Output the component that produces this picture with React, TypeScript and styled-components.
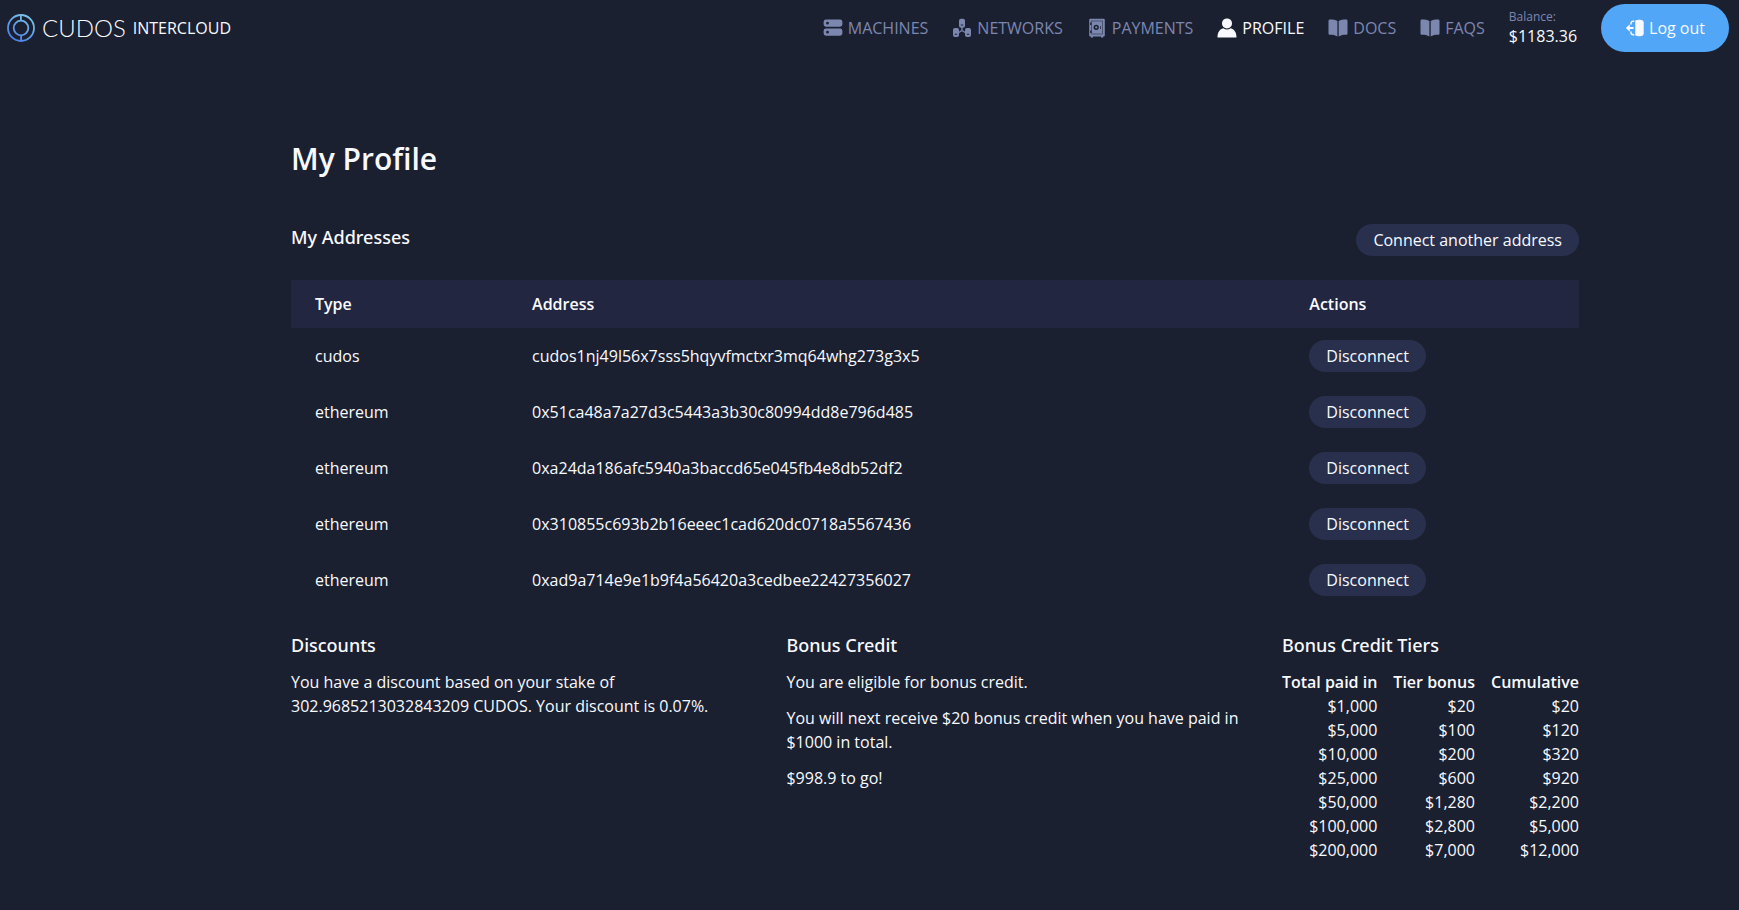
import React from 'react';
import styled, { createGlobalStyle } from 'styled-components';

const GlobalStyle = createGlobalStyle`
  *, *::before, *::after { box-sizing: border-box; }
  body {
    margin: 0;
    background: #1b2030;
    color: #f8faff;
    font: 400 16px/24px "Open Sans", "Liberation Sans", sans-serif;
  }
  h1, h2, p { margin: 0; }
`;

const Header = styled.header`
  display: flex;
  align-items: center;
  justify-content: space-between;
  height: 56px;
  padding: 0 10px 0 7px;
`;

const Brand = styled.a`
  display: flex;
  align-items: center;
  gap: 7px;
  color: #f8faff;
  text-decoration: none;
`;

const Wordmark = styled.span`
  font: 300 24px/28px Lato, sans-serif;
`;

const Nav = styled.nav`
  display: flex;
  align-items: center;
  gap: 24px;
`;

const NavLink = styled.a<{ $active?: boolean }>`
  display: flex;
  align-items: center;
  gap: 5px;
  color: ${(p) => (p.$active ? '#f8faff' : '#7c87b0')};
  text-decoration: none;
`;

const Balance = styled.div`
  display: flex;
  flex-direction: column;
  line-height: 22px;
`;

const BalanceLabel = styled.span`
  font-size: 12px;
  line-height: 16px;
  color: #7c87b0;
`;

const LogoutButton = styled.button`
  display: flex;
  align-items: center;
  gap: 4px;
  height: 48px;
  padding: 0 24px;
  border: 0;
  border-radius: 24px;
  background: #52a6f8;
  color: #f8faff;
  font: inherit;
  cursor: pointer;
`;

const Main = styled.main`
  padding: 84px 160px 40px 291px;
`;

const Title = styled.h1`
  font-size: 30px;
  line-height: 38px;
  font-weight: 600;
`;

const SectionBar = styled.div`
  display: flex;
  justify-content: space-between;
  margin: 46px 0 24px;
`;

const SectionTitle = styled.h2`
  font: 500 18px/26px "Noto Sans", "Open Sans", sans-serif;
`;

const PillButton = styled.button`
  height: 32px;
  padding: 0 17px;
  border: 0;
  border-radius: 16px;
  background: #28304e;
  color: #f8faff;
  font: inherit;
  cursor: pointer;
`;

const AddressTable = styled.table`
  width: 100%;
  border-collapse: collapse;
  text-align: left;

  thead { background: #222640; }
  th { height: 48px; padding: 0 24px; font-weight: 600; }
  td { height: 56px; padding: 0 24px; }
  ${PillButton} { display: block; }
`;

const Summary = styled.div`
  display: flex;
  align-items: flex-start;
  gap: 32px;
  padding-top: 24px;
`;

const Panel = styled.section<{ $fit?: boolean }>`
  display: flex;
  flex-direction: column;
  gap: 12px;
  flex: ${(p) => (p.$fit ? '0 0 auto' : '1 1 0')};
`;

const TierTable = styled.table`
  border-collapse: collapse;
  text-align: right;

  th { font-weight: 600; }
  th, td { padding: 0 0 0 16px; }
  th:first-child, td:first-child { padding-left: 0; }
`;

const Icon = ({ children }: { children: React.ReactNode }) => (
  <svg width="20" height="20" viewBox="0 0 20 20" fill="currentColor" aria-hidden="true">
    {children}
  </svg>
);

const MachinesIcon = () => (
  <Icon>
    <path fillRule="evenodd" d="M3 1.5h14a2.4 2.4 0 0 1 2.4 2.4v2.4A2.4 2.4 0 0 1 17 8.7H3A2.4 2.4 0 0 1 .6 6.3V3.9A2.4 2.4 0 0 1 3 1.5zM4.5 3.8a1.4 1.4 0 1 0 0 2.8 1.4 1.4 0 0 0 0-2.8z" />
    <path fillRule="evenodd" d="M3 10.5h14a2.4 2.4 0 0 1 2.4 2.4v2.4a2.4 2.4 0 0 1-2.4 2.4H3a2.4 2.4 0 0 1-2.4-2.4v-2.4A2.4 2.4 0 0 1 3 10.5zM4.5 12.8a1.4 1.4 0 1 0 0 2.8 1.4 1.4 0 0 0 0-2.8z" />
  </Icon>
);

const NetworksIcon = () => (
  <Icon>
    <path d="M10 9v4M10 12.5l-4 2.5M10 12.5l4 2.5" stroke="currentColor" strokeWidth="1.3" />
    <path fillRule="evenodd" d="M9 .8h2a2 2 0 0 1 2 2v5a2 2 0 0 1-2 2H9a2 2 0 0 1-2-2v-5a2 2 0 0 1 2-2zM8.8 6.6v1h2.4v-1z" />
    <path fillRule="evenodd" d="M3 10h2a2 2 0 0 1 2 2v5a2 2 0 0 1-2 2H3a2 2 0 0 1-2-2v-5a2 2 0 0 1 2-2zM2.8 15.8v1h2.4v-1z" />
    <path fillRule="evenodd" d="M15 10h2a2 2 0 0 1 2 2v5a2 2 0 0 1-2 2h-2a2 2 0 0 1-2-2v-5a2 2 0 0 1 2-2zM14.8 15.8v1h2.4v-1z" />
  </Icon>
);

const PaymentsIcon = () => (
  <Icon>
    <path d="M3.2.8h13.6a1 1 0 0 1 1 1v15.6a1 1 0 0 1-1 1h-.6v1.1h-2.2v-1.1H6v1.1H3.800v-1.1h-.6a1 1 0 0 1-1-1V1.800a1 1 0 0 1 1-1z" />
    <rect x="4.5" y="3" width="11" height="13" fill="none" stroke="#1b2030" strokeOpacity=".55" strokeWidth=".9" />
    <path d="M3.800 4.500v2.500M3.800 12.500V15" stroke="#1b2030" strokeWidth="1.3" />
    <circle cx="9.200" cy="9.300" r="1.900" fill="none" stroke="#1b2030" strokeWidth="1.5" />
    <path d="M13.500 8V11" stroke="#1b2030" strokeOpacity=".7" />
  </Icon>
);

const ProfileIcon = () => (
  <Icon>
    <circle cx="10" cy="5.4" r="5" />
    <path d="M.5 19.500c0-5.500 2.500-8.300 5.800-9.200 2.200 1.600 5.200 1.600 7.400 0 3.300.9 5.800 3.700 5.800 9.200z" />
  </Icon>
);

const BookIcon = () => (
  <Icon>
    <path d="M9.400 3v15.500C7.300 17 4.800 16.700 2 16.700c-.8 0-1.500-.5-1.500-1.300V2.900c0-.8.7-1.300 1.500-1.300 3 0 5.400.3 7.400 1.400z" />
    <path d="M10.700 3v15.500c2.100-1.500 4.600-1.800 7.300-1.800.8 0 1.500-.5 1.500-1.300V2.900c0-.8-.7-1.300-1.500-1.300-3 0-5.300.3-7.300 1.400z" />
  </Icon>
);

const LogoutIcon = () => (
  <Icon>
    <path d="M10.300 2.600 13.500 1.800q.8-.2 1.700 0l2 .5q1.500.4 1.500 2v11.400q0 1.600-1.500 2l-2 .5q-.9.200-1.700 0l-3.200-.8z" />
    <path d="M9.300 3.200H8.200A2.200 2.200 0 0 0 6 5.400v1M9.300 16.800H8.200A2.200 2.200 0 0 1 6 14.600v-1" fill="none" stroke="currentColor" strokeWidth="1.5" />
    <path d="M4.800 6.200v2.700H8.600v2.200H4.800v2.700L.9 10z" />
  </Icon>
);

const CudosMark = () => (
  <svg width="28" height="28" viewBox="0 0 28 28" fill="none" stroke="url(#mark)" strokeWidth="1.8" aria-hidden="true">
    <defs>
      <linearGradient id="mark" gradientUnits="userSpaceOnUse" x1="22" y1="2" x2="6" y2="26">
        <stop offset="0" stopColor="#7cc4ea" />
        <stop offset="1" stopColor="#4b7ee8" />
      </linearGradient>
    </defs>
    <circle cx="14" cy="14" r="13" />
    <circle cx="14" cy="14" r="7.3" />
    <path d="M13.9 1v5.7M14.1 21.3V27" />
  </svg>
);

const navItems = [
  { label: 'MACHINES', icon: MachinesIcon },
  { label: 'NETWORKS', icon: NetworksIcon },
  { label: 'PAYMENTS', icon: PaymentsIcon },
  { label: 'PROFILE', icon: ProfileIcon, active: true },
  { label: 'DOCS', icon: BookIcon },
  { label: 'FAQS', icon: BookIcon },
];

const addresses = [
  ['cudos', 'cudos1nj49l56x7sss5hqyvfmctxr3mq64whg273g3x5'],
  ['ethereum', '0x51ca48a7a27d3c5443a3b30c80994dd8e796d485'],
  ['ethereum', '0xa24da186afc5940a3baccd65e045fb4e8db52df2'],
  ['ethereum', '0x310855c693b2b16eeec1cad620dc0718a5567436'],
  ['ethereum', '0xad9a714e9e1b9f4a56420a3cedbee22427356027'],
];

const tiers = [
  ['$1,000', '$20', '$20'],
  ['$5,000', '$100', '$120'],
  ['$10,000', '$200', '$320'],
  ['$25,000', '$600', '$920'],
  ['$50,000', '$1,280', '$2,200'],
  ['$100,000', '$2,800', '$5,000'],
  ['$200,000', '$7,000', '$12,000'],
];

export default function App() {
  return (
    <>
      <GlobalStyle />
      <Header>
        <Brand href="#">
          <CudosMark />
          <Wordmark>CUDOS</Wordmark>
          <span>INTERCLOUD</span>
        </Brand>
        <Nav>
          {navItems.map(({ label, icon: ItemIcon, active }) => (
            <NavLink key={label} href="#" $active={active} aria-current={active ? 'page' : undefined}>
              <ItemIcon />
              {label}
            </NavLink>
          ))}
          <Balance>
            <BalanceLabel>Balance:</BalanceLabel>
            <span>$1183.36</span>
          </Balance>
          <LogoutButton type="button">
            <LogoutIcon />
            Log out
          </LogoutButton>
        </Nav>
      </Header>
      <Main>
        <Title>My Profile</Title>
        <SectionBar>
          <SectionTitle>My Addresses</SectionTitle>
          <PillButton type="button">Connect another address</PillButton>
        </SectionBar>
        <AddressTable>
          <thead>
            <tr>
              <th scope="col">Type</th>
              <th scope="col">Address</th>
              <th scope="col">Actions</th>
            </tr>
          </thead>
          <tbody>
            {addresses.map(([type, address]) => (
              <tr key={address}>
                <td>{type}</td>
                <td>{address}</td>
                <td>
                  <PillButton type="button">Disconnect</PillButton>
                </td>
              </tr>
            ))}
          </tbody>
        </AddressTable>
        <Summary>
          <Panel>
            <SectionTitle>Discounts</SectionTitle>
            <p>You have a discount based on your stake of 302.9685213032843209 CUDOS. Your discount is 0.07%.</p>
          </Panel>
          <Panel>
            <SectionTitle>Bonus Credit</SectionTitle>
            <p>You are eligible for bonus credit.</p>
            <p>You will next receive $20 bonus credit when you have paid in $1000 in total.</p>
            <p>$998.9 to go!</p>
          </Panel>
          <Panel $fit>
            <SectionTitle>Bonus Credit Tiers</SectionTitle>
            <TierTable>
              <thead>
                <tr>
                  <th scope="col">Total paid in</th>
                  <th scope="col">Tier bonus</th>
                  <th scope="col">Cumulative</th>
                </tr>
              </thead>
              <tbody>
                {tiers.map(([paid, bonus, cumulative]) => (
                  <tr key={paid}>
                    <td>{paid}</td>
                    <td>{bonus}</td>
                    <td>{cumulative}</td>
                  </tr>
                ))}
              </tbody>
            </TierTable>
          </Panel>
        </Summary>
      </Main>
    </>
  );
}
